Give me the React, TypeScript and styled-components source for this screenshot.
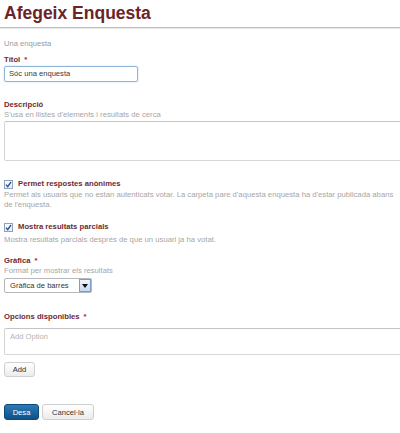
import * as React from 'react';
import styled, { createGlobalStyle } from 'styled-components';

const GlobalStyle = createGlobalStyle`
    html, body {
        margin: 0;
        padding: 0;
        background: #ffffff;
        overflow: hidden;
    }
    body {
        font-family: 'Liberation Sans', Arial, sans-serif;
        color: #333333;
    }
`;

const Page = styled.div`
    width: 450px;
    padding: 3px 0 0 4px;
`;

const Header = styled.div`
    margin-left: -4px;
    padding: 0 0 4px 4px;
    border-bottom: 1px solid #c2c2c2;
    box-shadow: 0 1px 0 #e6e6e6;
`;

const Title = styled.h1`
    margin: 0;
    font-size: 17.5px;
    line-height: 20px;
    font-weight: bold;
    color: #6b2428;
`;

const Lead = styled.div`
    margin-top: 11px;
    font-size: 7.6px;
    line-height: 10px;
    color: #9a9a9a;
`;

const Field = styled.div<{ $gap: number }>`
    margin-top: ${(p) => p.$gap}px;
`;

const Label = styled.div`
    font-size: 7.7px;
    line-height: 10px;
    font-weight: bold;
    color: #6e2a30;
`;

const Required = styled.span`
    color: #b0282e;
    margin-left: 4px;
`;

const Help = styled.div<{ $gap?: number }>`
    max-width: 396px;
    margin-top: ${(p) => p.$gap ?? 0}px;
    font-size: 7.7px;
    line-height: 10px;
    color: #a6a6a6;
`;

const TextInput = styled.div`
    margin-top: 1px;
    box-sizing: border-box;
    width: 134px;
    height: 16px;
    padding-left: 4px;
    border: 1px solid #8fb6d8;
    border-radius: 2px;
    box-shadow: 0 0 2px #b9d6ef;
    font-size: 7.6px;
    line-height: 14px;
    color: #3a3a3a;
`;

const TextArea = styled.div<{ $height: number; $gap: number }>`
    margin-top: ${(p) => p.$gap}px;
    box-sizing: border-box;
    width: 100%;
    height: ${(p) => p.$height}px;
    padding: 3px 5px;
    border: 1px solid #d6d6d6;
    border-top-color: #c4c4c4;
    border-radius: 2px;
    font-size: 7.6px;
    line-height: 10px;
    color: #b4b4b4;
`;

const CheckRow = styled.div`
    display: flex;
    align-items: center;
    gap: 5px;
    height: 10px;
`;

const Box = styled.span`
    display: flex;
    align-items: center;
    justify-content: center;
    box-sizing: border-box;
    width: 9px;
    height: 9px;
    border: 1px solid #8aa2c4;
    background: linear-gradient(#ffffff, #e4ebf4);
`;

const Select = styled.div`
    margin-top: 2px;
    display: flex;
    box-sizing: border-box;
    width: 88px;
    height: 15px;
    border: 1px solid #b8b8b8;
    border-radius: 2px;
    background: #ffffff;
`;

const SelectText = styled.span`
    flex: 1;
    padding-left: 5px;
    font-size: 7.6px;
    line-height: 13px;
    color: #333333;
`;

const SelectArrow = styled.span`
    display: flex;
    align-items: center;
    justify-content: center;
    box-sizing: border-box;
    width: 12px;
    height: 13px;
    border: 1px solid #7c9ccb;
    background: linear-gradient(#eef4fc, #c7d9f1);
`;

const Button = styled.button<{ $primary?: boolean; $width: number; $height: number }>`
    display: block;
    box-sizing: border-box;
    width: ${(p) => p.$width}px;
    height: ${(p) => p.$height}px;
    padding: 0;
    border-radius: 3px;
    border: 1px solid ${(p) => (p.$primary ? '#0d4a7c' : '#cfcfcf')};
    background: ${(p) =>
        p.$primary ? 'linear-gradient(#2a7ab8, #0e5288)' : 'linear-gradient(#ffffff, #ececec)'};
    color: ${(p) => (p.$primary ? '#ffffff' : '#333333')};
    font-family: 'Liberation Sans', Arial, sans-serif;
    font-size: 7.6px;
`;

const Toolbar = styled.div<{ $gap: number }>`
    margin-top: ${(p) => p.$gap}px;
    display: flex;
    gap: 3px;
`;

function Check() {
    return (
        <Box>
            <svg width="7" height="7" viewBox="0 0 7 7">
                <path d="M1 3.6 L2.7 5.6 L6 1" fill="none" stroke="#2b4f8a" strokeWidth="1.3" />
            </svg>
        </Box>
    );
}

export default function App() {
    return (
        <>
            <GlobalStyle />
            <Page>
                <Header>
                    <Title>Afegeix Enquesta</Title>
                </Header>

                <Lead>Una enquesta</Lead>

                <Field $gap={6}>
                    <Label>
                        Títol<Required>*</Required>
                    </Label>
                    <TextInput>Sóc una enquesta</TextInput>
                </Field>

                <Field $gap={18}>
                    <Label>Descripció</Label>
                    <Help>S'usa en llistes d'elements i resultats de cerca</Help>
                    <TextArea $height={40} $gap={1} />
                </Field>

                <Field $gap={18}>
                    <CheckRow>
                        <Check />
                        <Label>Permet respostes anònimes</Label>
                    </CheckRow>
                    <Help $gap={1}>
                        Permet als usuaris que no estan autenticats votar. La carpeta pare d'aquesta enquesta ha
                        d'estar publicada abans de l'enquesta.
                    </Help>
                </Field>

                <Field $gap={12}>
                    <CheckRow>
                        <Check />
                        <Label>Mostra resultats parcials</Label>
                    </CheckRow>
                    <Help $gap={3}>Mostra resultats parcials després de que un usuari ja ha votat.</Help>
                </Field>

                <Field $gap={11}>
                    <Label>
                        Gràfica<Required>*</Required>
                    </Label>
                    <Help>Format per mostrar els resultats</Help>
                    <Select>
                        <SelectText>Gràfica de barres</SelectText>
                        <SelectArrow>
                            <svg width="6" height="4" viewBox="0 0 6 4">
                                <path d="M0 0 H6 L3 4 Z" fill="#111111" />
                            </svg>
                        </SelectArrow>
                    </Select>
                </Field>

                <Field $gap={19}>
                    <Label>
                        Opcions disponibles<Required>*</Required>
                    </Label>
                    <TextArea $height={27} $gap={6}>
                        Add Option
                    </TextArea>
                    <Toolbar $gap={7}>
                        <Button $width={31} $height={15}>
                            Add
                        </Button>
                    </Toolbar>
                </Field>

                <Toolbar $gap={27}>
                    <Button $primary $width={35} $height={16}>
                        Desa
                    </Button>
                    <Button $width={52} $height={16}>
                        Cancel·la
                    </Button>
                </Toolbar>
            </Page>
        </>
    );
}
